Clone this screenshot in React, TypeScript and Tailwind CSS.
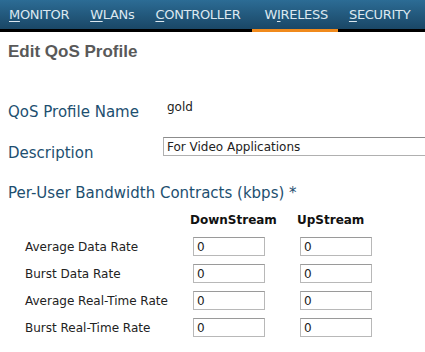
const navItems = [
  { key: "M", rest: "ONITOR", active: false },
  { key: "W", rest: "LANs", active: false },
  { key: "C", rest: "ONTROLLER", active: false },
  { key: "WI", rest: "RELESS", active: true, underlineIdx: 1 },
  { key: "S", rest: "ECURITY", active: false },
];

const rows = [
  "Average Data Rate",
  "Burst Data Rate",
  "Average Real-Time Rate",
  "Burst Real-Time Rate",
];

const verdana = "font-['DejaVu_Sans',Verdana,sans-serif]";

function NavLabel({ item }: { item: (typeof navItems)[number] }) {
  if (item.underlineIdx === 1) {
    return (
      <span>
        W<span className="underline underline-offset-2">I</span>
        {item.rest}
      </span>
    );
  }
  return (
    <span>
      <span className="underline underline-offset-2">{item.key}</span>
      {item.rest}
    </span>
  );
}

function SmallInput({ value }: { value: string }) {
  return (
    <input
      readOnly
      value={value}
      className={`w-[72px] h-[19px] shrink-0 border border-[#b8b8b8] border-t-[#9a9a9a] bg-white px-[3px] text-[12px] text-[#222] ${verdana} outline-none`}
    />
  );
}

export default function App() {
  return (
    <div className="w-[425px] h-[352px] overflow-hidden bg-white">
      <nav className="flex h-[29px] bg-gradient-to-b from-[#2c6c95] to-[#1a4766] pl-[9px] gap-[21px] items-center">
        {navItems.map((item) => (
          <div key={item.rest} className={`relative h-full flex items-center ${item.active ? "ml-[3px]" : ""}`}>
            <span className={`text-[13px] tracking-[-0.3px] text-[#dce8f0] ${verdana}`}>
              <NavLabel item={item} />
            </span>
            {item.active && (
              <div className="absolute left-[-12px] right-[-10px] bottom-[-3px] h-[3px] bg-[#f08a1c]" />
            )}
          </div>
        ))}
      </nav>
      <div className="h-[3px] bg-black" />

      <div className="px-[8px] font-['Liberation_Sans',Arial,sans-serif]">
        <h1 className="mt-[10px] text-[17px] font-bold text-[#595959] leading-[20px]">
          Edit QoS Profile
        </h1>

        <div className="mt-[40px] flex items-center h-[20px]">
          <span className={`w-[159px] shrink-0 text-[15px] leading-[20px] text-[#1d4f70] ${verdana}`}>QoS Profile Name</span>
          <span className={`text-[12px] leading-[16px] text-[#222] ${verdana} -mt-[10px]`}>gold</span>
        </div>

        <div className="mt-[15px] flex items-start">
          <span className={`w-[155px] shrink-0 mt-[7px] text-[15px] leading-[18px] text-[#1d4f70] ${verdana}`}>Description</span>
          <input
            readOnly
            value="For Video Applications"
            className={`w-[280px] h-[19px] shrink-0 border border-[#b0b0b0] border-t-[#8c8c8c] bg-white px-[3px] text-[12px] text-[#222] ${verdana} outline-none`}
          />
        </div>

        <div className={`mt-[21px] text-[15px] leading-[20px] text-[#1d4f70] ${verdana}`}>
          Per-User Bandwidth Contracts (kbps) *
        </div>

        <div className={`mt-[8px] ${verdana} text-[12px]`}>
          <div className="flex h-[18px] items-center font-bold text-[#111]">
            <span className="w-[182px]" />
            <span className="w-[107px]">DownStream</span>
            <span>UpStream</span>
          </div>
          <div className="mt-[8px] flex flex-col gap-[8px]">
            {rows.map((r) => (
              <div key={r} className="flex items-center">
                <span className="w-[185px] shrink-0 pl-[17px] text-[#222]">{r}</span>
                <SmallInput value="0" />
                <span className="w-[35px] shrink-0" />
                <SmallInput value="0" />
              </div>
            ))}
          </div>
        </div>
      </div>
    </div>
  );
}
